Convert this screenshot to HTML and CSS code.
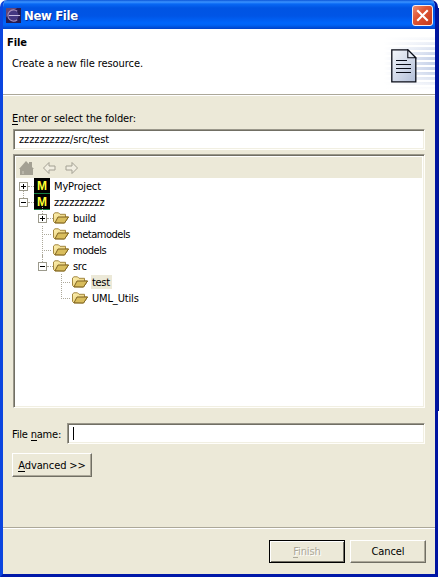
FILE: index.html
```html
<!DOCTYPE html>
<html lang="en">
<head>
<meta charset="utf-8">
<title>New File</title>
<link rel="stylesheet" href="styles.css">
</head>
<body>
<svg width="0" height="0" class="defs">
  <defs>
    <linearGradient id="fold" x1="0" y1="0" x2="1" y2="1"><stop offset="0" stop-color="#fff3b4"/><stop offset="1" stop-color="#dcbb5a"/></linearGradient>
    <linearGradient id="page" x1="0" y1="0" x2="1" y2="1"><stop offset="0" stop-color="#f4f7fc"/><stop offset="1" stop-color="#b3bfd8"/></linearGradient>
    <symbol id="folder" viewBox="0 0 16 12">
      <path d="M.5 9.500V2L2 .8h3.500L7 2.300h5.500v2.700h3L11.500 11H2z" fill="url(#fold)" stroke="#a38740"/>
      <path d="M2 10.800L5 5h10.500L11.500 11z" fill="#d9bd5c" stroke="#806522"/>
    </symbol>
  </defs>
</svg>
<div class="window">
  <header class="titlebar">
    <svg class="app" width="15" height="15" viewBox="0 0 16 16">
      <rect width="16" height="16" fill="#271b50"/>
      <path d="M0 0h12L4 5 0 10z" fill="#654675"/>
      <circle cx="8" cy="8" r="5.5" fill="#443781"/>
      <path d="M12 3.500A6 6 0 1 0 12 12.500" fill="none" stroke="#a18cbd" stroke-width="1.200"/>
      <path d="M3 8h12" stroke="#c8bce3" stroke-width="1.300"/>
    </svg>
    <span class="title">New File</span>
    <svg class="close" width="21" height="21" viewBox="0 0 21 21">
      <defs><linearGradient id="red" x1="0" y1="0" x2="1" y2="1"><stop offset="0" stop-color="#ee9274"/><stop offset=".4" stop-color="#df5534"/><stop offset="1" stop-color="#c3381b"/></linearGradient></defs>
      <rect x=".5" y=".5" width="20" height="20" rx="2.5" fill="url(#red)" stroke="#f5eef0"/>
      <path d="M6 6l9 9M15 6l-9 9" stroke="#fff" stroke-width="2.1" stroke-linecap="square"/>
    </svg>
  </header>
  <section class="banner">
    <div class="banner-text"><h1>File</h1><p>Create a new file resource.</p></div>
    <div class="art">
      <svg width="26" height="34" viewBox="0 0 26 34">
        <path d="M.8 .8h16l8 8v24H.8z" fill="url(#page)" stroke="#080b16" stroke-width="1.300"/>
        <path d="M16.800 .8v8h8z" fill="#e8edf7" stroke="#080b16" stroke-width="1.100"/>
        <path d="M5 11.500h11M5 15.500h15M5 19.500h15M5 23.500h15" stroke="#080b16"/>
      </svg>
    </div>
  </section>
  <main class="content">
    <label class="folder-label"><u>E</u>nter or select the folder:</label>
    <div class="field path"><span>zzzzzzzzzz/src/test</span></div>
    <div class="tree">
      <div class="tools">
        <svg width="66" height="16" viewBox="0 0 66 16">
          <path d="M0 9L7 1l3 3V2h3v5l2 2h-1v6H1V9z" fill="#a3a093"/>
          <path d="M3 11h2v3H3z" fill="#b9b6a9"/>
          <path d="M24.500 8L30 2.500v3.500h6v4h-6v3.500z" fill="#f1eee1" stroke="#a3a093"/>
          <path d="M58.500 8L53 2.500v3.500h-6v4h6v3.500z" fill="#f1eee1" stroke="#a3a093"/>
        </svg>
      </div>
      <div class="rows">
        <div class="row"><i class="box plus"></i><i class="dash"></i><b class="m">M</b><span class="loose">MyProject</span></div>
        <div class="row"><i class="box link"></i><i class="dash"></i><b class="m">M</b><span class="loose">zzzzzzzzzz</span></div>
        <div class="row sub"><i class="box plus link"></i><i class="dash"></i><svg class="fi"><use href="#folder"/></svg><span>build</span></div>
        <div class="row sub"><i class="stem"></i><svg class="fi"><use href="#folder"/></svg><span class="tight">metamodels</span></div>
        <div class="row sub"><i class="stem"></i><svg class="fi"><use href="#folder"/></svg><span class="tight">models</span></div>
        <div class="row sub"><i class="box link"></i><i class="dash"></i><svg class="fi"><use href="#folder"/></svg><span>src</span></div>
        <div class="row leaf"><i class="stem"></i><svg class="fi"><use href="#folder"/></svg><span class="selected">test</span></div>
        <div class="row leaf"><i class="stem last"></i><svg class="fi"><use href="#folder"/></svg><span class="loose">UML_Utils</span></div>
      </div>
    </div>
    <div class="name-row"><label>File <u>n</u>ame:</label><div class="field name"><i class="caret"></i></div></div>
    <button class="btn advanced"><span><u>A</u>dvanced &gt;&gt;</span></button>
  </main>
  <footer class="actions">
    <button class="btn finish"><span><u>F</u>inish</span></button>
    <button class="btn"><span>Cancel</span></button>
  </footer>
</div>
</body>
</html>
```
FILE: styles.css
```css
* { box-sizing: border-box; }
html { background: #fff; }
body { margin: 0; width: 439px; height: 577px; overflow: hidden; background: linear-gradient(#fff 8px, #001590 8px 411px, #fff 411px) 438px 0 / 1px 577px no-repeat; font: 11px/13px "DejaVu Sans Condensed", "DejaVu Sans", sans-serif; font-stretch: condensed; letter-spacing: -0.1px; color: #000; }
.defs { position: absolute; }
u { text-decoration: none; box-shadow: inset 0 -1px currentColor; }
.window { width: 438px; height: 577px; display: flex; flex-direction: column; border: solid; border-width: 0 3px 3px 3px; border-color: #0830c8 #0014a0 #0018a8 #0b45df; border-radius: 7px 7px 0 0; background: #ece9d8; overflow: hidden; }
.titlebar { height: 29px; flex: none; margin: 0 -3px; padding: 2px 5px 0 6px; display: flex; align-items: center; background: linear-gradient(#0b55d8 0, #3b93ff 2px, #0868f4 4px, #0054e3 8px, #0055e6 16px, #0066fc 23px, #0063f5 25px, #0042c8 29px); }
.title { margin-left: 3px; flex: 1; font: bold 13px/16px "DejaVu Sans Condensed", sans-serif; letter-spacing: -.35px; color: #fff; text-shadow: 1px 1px #0a2e91; }
.banner { height: 67px; flex: none; display: flex; justify-content: space-between; background: #fff; border-bottom: 1px solid #fff; box-shadow: inset 0 -1px #aca899; }
.banner-text { padding: 7px 0 0 4px; }
h1 { margin: 0; font-size: 11px; line-height: 14px; letter-spacing: -.1px; }
p { margin: 7px 0 0 5px; letter-spacing: -.07px; }
.art { width: 60px; height: 55px; margin-top: 6px; padding: 14px 0 0 16px; background: linear-gradient(90deg, #fff 15%, transparent), linear-gradient(#fff, transparent 40%, transparent 65%, #fff), repeating-linear-gradient(#fff 0 2px, #c6d1e9 2px 5px); }
.art svg { display: block; }
.content { flex: 1; padding: 16px 10px 0; display: flex; flex-direction: column; }
.folder-label { height: 17px; margin-left: -1px; }
.field, .tree { background: #fff; border: 1px solid; border-color: #9a978a #fffefa #fffefa #9a978a; box-shadow: inset 1px 1px #716f64, inset -1px -1px #f1efe2; }
.field { height: 21px; padding: 3px 5px; }
.tree { height: 254px; margin-top: 4px; padding: 2px; }
.tools { height: 21px; background: #ece9d8; padding: 3px 0 0 3px; }
.rows { padding-left: 3px; }
.row { height: 16px; display: flex; align-items: center; letter-spacing: -.3px; }
.sub { padding-left: 19px; }
.leaf { padding-left: 38px; }
.row span { height: 14px; margin-left: 3px; padding: 1px 1px 0; }
.row .loose { letter-spacing: -.15px; }
.row .tight { letter-spacing: -.48px; }
.row .selected { padding-right: 2px; background: #ece9d8; }
.box { width: 9px; height: 9px; border: 1px solid #9c9a8c; background: linear-gradient(#000, #000) 1px 3px / 5px 1px no-repeat, #fff; position: relative; }
.plus { background: linear-gradient(#000, #000) 1px 3px / 5px 1px no-repeat, linear-gradient(#000, #000) 3px 1px / 1px 5px no-repeat, #fff; }
.link::before { content: ""; position: absolute; left: 3px; top: -8px; height: 7px; border-left: 1px dotted #aca899; }
.dash { width: 6px; border-top: 1px dotted #aca899; }
.stem { width: 11px; height: 16px; margin-left: 4px; background: repeating-linear-gradient(90deg, #aca899 0 1px, transparent 1px 2px) 0 8px / 10px 1px no-repeat, repeating-linear-gradient(#aca899 0 1px, transparent 1px 2px) 0 0 / 1px 16px no-repeat; }
.last { background-size: 10px 1px, 1px 8px; }
.m { width: 16px; height: 16px; background: #000; border-bottom: 1px solid #168044; color: #ff3; font: bold 12px/16px "Liberation Sans", sans-serif; letter-spacing: 0; text-align: center; }
.fi { width: 16px; height: 12px; }
.name-row { display: flex; margin-top: 15px; }
.name-row label { width: 55px; margin-left: -1px; padding-top: 5px; white-space: nowrap; letter-spacing: -.2px; }
.name { flex: 1; padding: 3px 5px; }
.caret { display: block; width: 1px; height: 13px; background: #000; }
.btn { width: 76px; height: 23px; padding: 0; font: inherit; letter-spacing: inherit; color: #000; background: #ece9d8; border: 1px solid; border-color: #fff #716f64 #716f64 #fff; box-shadow: inset -1px -1px #aca899; }
.advanced { width: 80px; margin: 9px 0 0 -1px; height: 24px; }
.actions { height: 47px; flex: none; padding: 12px 9px 0; display: flex; justify-content: flex-end; gap: 5px; border-top: 1px solid #aca899; box-shadow: inset 0 1px #fff; }
.finish { border-color: #000; color: #aca899; box-shadow: inset 1px 1px #fff, inset -1px -1px #716f64; text-shadow: 1px 1px #fff; }
```
